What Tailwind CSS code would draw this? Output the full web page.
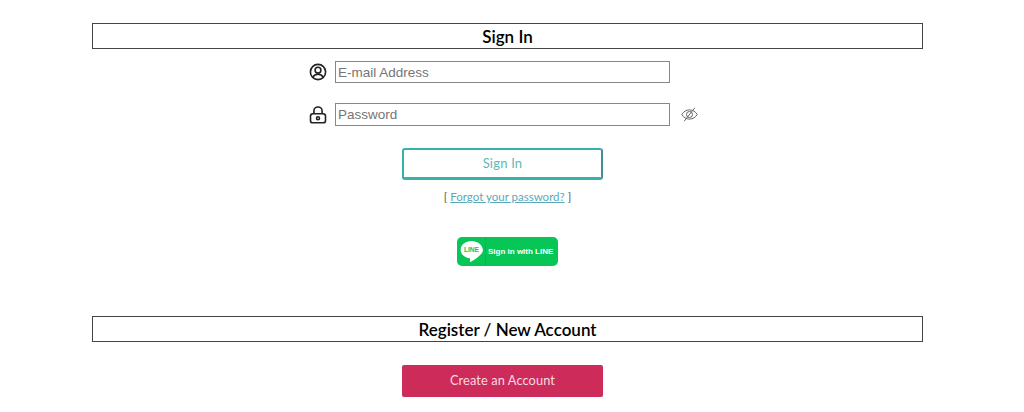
<!DOCTYPE html>
<html>
<head>
<meta charset="utf-8">
<script src="https://cdn.jsdelivr.net/npm/@tailwindcss/browser@4"></script>
</head>
<body class="bg-white overflow-hidden font-['Lato',sans-serif]">
<main class="w-[831px] ml-[92px] pt-[23px] flex flex-col">
  <h2 class="h-[26px] border border-[#444] pt-[1px] flex items-center justify-center text-[17px] font-semibold text-black">Sign In</h2>
  <div class="mt-3 ml-[217px] flex items-center gap-[8px] h-[22px]">
    <svg class="w-[18px] h-[18px]" viewBox="0 0 18 18" fill="none" stroke="#222" stroke-width="1.6"><circle cx="9" cy="9" r="7.6"/><circle cx="9" cy="7.2" r="2.9"/><path d="M3.8 14.2c1.200-2 3-2.900 5.200-2.900s4 .9 5.200 2.900"/></svg>
    <input class="w-[335px] h-[22px] border border-[#888] px-[2px] text-[13.5px] font-['Liberation_Sans',sans-serif] placeholder:text-[#757575]" placeholder="E-mail Address">
  </div>
  <div class="mt-[20px] ml-[217px] flex items-center gap-[8px] h-[23px]">
    <svg class="w-[18px] h-[18px]" viewBox="0 0 18 18" fill="none" stroke="#222" stroke-width="1.6"><rect x="1.500" y="7.800" width="15" height="9" rx="2.400"/><path d="M4.900 7.800V5C4.900 2.700 6.700 1 9 1s4.100 1.700 4.100 4v2.800"/><circle cx="9" cy="12.300" r="1.500"/></svg>
    <input class="w-[335px] h-[23px] border border-[#888] px-[2px] text-[13.5px] font-['Liberation_Sans',sans-serif] placeholder:text-[#757575]" placeholder="Password">
    <svg class="w-[17px] h-[15px] ml-[3px]" viewBox="0 0 17 15" fill="none" stroke="#666" stroke-width="1"><path d="M.8 7.500C2.600 4.500 5.300 2.900 8.500 2.900s5.900 1.600 7.700 4.600c-1.800 3-4.500 4.600-7.700 4.600S2.600 10.500.8 7.500z"/><circle cx="8.500" cy="7.500" r="3"/><path d="M3.200 14.200 13.800.8"/></svg>
  </div>
  <div class="mt-[22px] ml-[310px] w-[201px] h-[32px] flex items-center justify-center rounded-[3px] border-2 border-b-[3px] border-[#38b0ac] border-r-[#3f8f96] text-[13px] text-[#5fb8b5] tracking-[.2px]">Sign In</div>
  <p class="mt-[10px] ml-[310px] w-[211px] text-center text-[11.5px] leading-[14px] text-[#555]">[ <a class="text-[#5aa9b8] underline">Forgot your password?</a> ]</p>
  <div class="mt-[33px] ml-[365px] w-[101px] h-[29px] rounded-[5px] bg-[#06c755] flex items-center">
    <div class="w-[29px] h-full flex items-center justify-center border-r border-[#05b54d]">
      <svg class="w-[23px] h-[23px]" viewBox="0 0 21 21"><path fill="#fff" d="M10.500 1C5 1 .6 4.500.6 8.900c0 4 3.400 7.200 8.100 7.800.5.1.6.3.5.8l-.2 2c0 .5.3.7.9.4 2.600-1.300 8.800-5 10.800-9.500.2-.5.2-1 .2-1.500C20.400 4.500 16 1 10.500 1z"/><text x="10.500" y="11" text-anchor="middle" font-family="Liberation Sans" font-size="6" font-weight="700" fill="#06c755">LINE</text></svg>
    </div>
    <span class="ml-[2px] text-[8px] font-bold text-white font-['Liberation_Sans',sans-serif] whitespace-nowrap">Sign in with LINE</span>
  </div>
  <h2 class="mt-[50px] h-[26px] border border-[#444] pt-[1px] flex items-center justify-center text-[17px] font-semibold text-black">Register / New Account</h2>
  <div class="mt-[23px] ml-[310px] w-[201px] h-[32px] flex items-center justify-center rounded-[2px] bg-[#cd2b5a] text-[12.8px] text-[#f6dbe3] tracking-[.1px]">Create an Account</div>
</main>
</body>
</html>
